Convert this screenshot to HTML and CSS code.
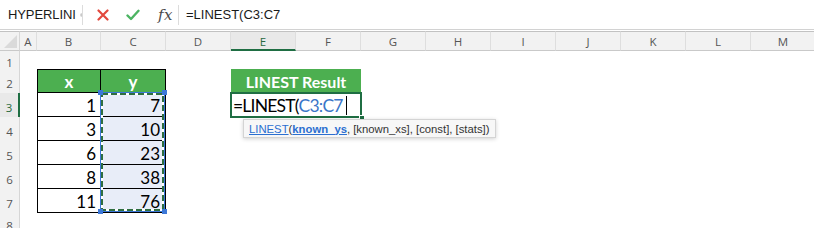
FILE: index.html
```html
<!DOCTYPE html>
<html>
<head>
<meta charset="utf-8">
<link rel="stylesheet" href="styles.css">
</head>
<body>
<div class="fbar">
  <div class="namebox">
    <span class="nb-text">HYPERLINI</span>
    <svg class="nb-arrows" width="9" height="16" viewBox="0 0 9 16"><path d="M4.5 1 L8 6 L1 6 Z" fill="#7a7a7a"/><path d="M4.5 15 L8 10 L1 10 Z" fill="#7a7a7a"/></svg>
  </div>
  <div class="sep"></div>
  <div class="icons">
    <svg class="ic" width="12" height="12" viewBox="0 0 12 12"><path d="M1.5 1.5 L10.5 10.5 M10.5 1.5 L1.5 10.5" stroke="#e2483d" stroke-width="2.2" stroke-linecap="round"/></svg>
    <svg class="ic" width="14" height="12" viewBox="0 0 14 12"><path d="M1.5 6.5 L5 10 L12.5 1.8" stroke="#4cb462" stroke-width="2.4" fill="none" stroke-linecap="round" stroke-linejoin="round"/></svg>
    <span class="fx">fx</span>
  </div>
  <div class="sep"></div>
  <div class="ftext">=LINEST(C3:C7</div>
</div>

<div class="sheet">
  <div class="grid">
    <div class="corner"><div class="tri"></div></div>
    <div class="ch">A</div><div class="ch">B</div><div class="ch">C</div><div class="ch">D</div><div class="ch ch-sel">E</div><div class="ch">F</div><div class="ch">G</div><div class="ch">H</div><div class="ch">I</div><div class="ch">J</div><div class="ch">K</div><div class="ch">L</div><div class="ch">M</div>

    <div class="rh">1</div>
    <div class="c"></div><div class="c"></div><div class="c"></div><div class="c"></div><div class="c"></div><div class="c"></div><div class="c"></div><div class="c"></div><div class="c"></div><div class="c"></div><div class="c"></div><div class="c"></div><div class="c"></div>

    <div class="rh">2</div>
    <div class="c"></div><div class="c t-hd t-first t-top">x</div><div class="c t-hd t-top">y</div><div class="c"></div><div class="c res-hd">LINEST Result</div><div class="c"></div><div class="c"></div><div class="c"></div><div class="c"></div><div class="c"></div><div class="c"></div><div class="c"></div>

    <div class="rh rh-sel">3</div>
    <div class="c"></div><div class="c t-num t-first">1</div><div class="c t-num t-sel">7</div><div class="c"></div><div class="c edit"><span>=LINEST(</span><span class="ref">C3:C7</span><span class="caret"></span></div><div class="c"></div><div class="c"></div><div class="c"></div><div class="c"></div><div class="c"></div><div class="c"></div><div class="c"></div>

    <div class="rh">4</div>
    <div class="c"></div><div class="c t-num t-first">3</div><div class="c t-num t-sel">10</div><div class="c"></div><div class="c"></div><div class="c"></div><div class="c"></div><div class="c"></div><div class="c"></div><div class="c"></div><div class="c"></div><div class="c"></div><div class="c"></div>

    <div class="rh">5</div>
    <div class="c"></div><div class="c t-num t-first">6</div><div class="c t-num t-sel">23</div><div class="c"></div><div class="c"></div><div class="c"></div><div class="c"></div><div class="c"></div><div class="c"></div><div class="c"></div><div class="c"></div><div class="c"></div><div class="c"></div>

    <div class="rh">6</div>
    <div class="c"></div><div class="c t-num t-first">8</div><div class="c t-num t-sel">38</div><div class="c"></div><div class="c"></div><div class="c"></div><div class="c"></div><div class="c"></div><div class="c"></div><div class="c"></div><div class="c"></div><div class="c"></div><div class="c"></div>

    <div class="rh">7</div>
    <div class="c"></div><div class="c t-num t-first">11</div><div class="c t-num t-sel">76</div><div class="c"></div><div class="c"></div><div class="c"></div><div class="c"></div><div class="c"></div><div class="c"></div><div class="c"></div><div class="c"></div><div class="c"></div><div class="c"></div>

    <div class="rh">8</div>
  </div>

  <svg class="marquee" width="69" height="124" viewBox="0 0 69 124">
    <rect x="2.5" y="2.5" width="64" height="119" fill="none" stroke="#3c78d8" stroke-width="1"/>
    <rect x="4" y="4" width="61" height="116" fill="none" stroke="#ffffff" stroke-width="2"/>
    <rect x="4" y="4" width="61" height="116" fill="none" stroke="#2f6e40" stroke-width="2" stroke-dasharray="6 3"/>
    <rect x="0" y="0" width="5" height="5" fill="#3c78d8"/>
    <rect x="64" y="0" width="5" height="5" fill="#3c78d8"/>
    <rect x="0" y="119" width="5" height="5" fill="#3c78d8"/>
    <rect x="64" y="119" width="5" height="5" fill="#3c78d8"/>
  </svg>

  <div class="fill-handle"></div>

  <div class="tip"><span class="lnk">LINEST</span>(<span class="lnk b">known_ys</span>, [known_xs], [const], [stats])</div>
</div>
</body>
</html>
```

FILE: styles.css
```css
html, body {
  margin: 0;
  padding: 0;
  background: #ffffff;
  width: 814px;
  height: 228px;
  overflow: hidden;
}

.fbar {
  height: 29px;
  display: flex;
  align-items: center;
  border-bottom: 1px solid #d2d2d2;
  margin-bottom: 1px;
  font-family: "Liberation Sans", Arial, sans-serif;
  font-size: 13px;
  color: #1a1a1a;
  background: #fff;
}

.namebox {
  width: 82px;
  height: 100%;
  display: flex;
  align-items: center;
  padding-left: 8px;
  box-sizing: border-box;
}

.nb-text {
  letter-spacing: -0.1px;
}

.nb-arrows {
  margin-left: 4px;
}

.sep {
  width: 1px;
  height: 20px;
  background: #dcdcdc;
}

.icons {
  width: 95px;
  display: flex;
  align-items: center;
  padding-left: 14px;
  box-sizing: border-box;
}

.ic {
  margin-right: 17px;
}

.icons .ic:nth-child(2) {
  margin-right: 18px;
}

.fx {
  font-family: "DejaVu Serif", "Liberation Serif", serif;
  font-style: italic;
  font-size: 15px;
  color: #4a4a4a;
  letter-spacing: 0.5px;
}

.ftext {
  padding-left: 7px;
  font-size: 13px;
}

.sheet {
  position: relative;
}

.grid {
  display: grid;
  grid-template-columns: 20px 17px 64px repeat(11, 65px);
  grid-template-rows: 20px 18px 24px 24px 24px 24px 24px 24px 20px;
  font-family: Lato, "Liberation Sans", sans-serif;
}

.corner {
  background: #f2f2f2;
  border-top: 1px solid #c2c2c2;
  border-bottom: 1px solid #c9c9c9;
  border-right: 1px solid #d6d6d6;
  box-sizing: border-box;
  position: relative;
}

.tri {
  position: absolute;
  right: 2px;
  bottom: 2px;
  width: 0;
  height: 0;
  border-left: 13px solid transparent;
  border-bottom: 13px solid #dadada;
}

.ch {
  background: #f2f2f2;
  border-top: 1px solid #c2c2c2;
  border-bottom: 1px solid #c9c9c9;
  border-right: 1px solid #dedede;
  box-sizing: border-box;
  display: flex;
  align-items: center;
  justify-content: center;
  font-family: "Open Sans", "Liberation Sans", sans-serif;
  font-size: 11.5px;
  color: #555;
  padding-top: 1px;
}

.ch-sel {
  color: #2a6a40;
  border-bottom: 2px solid #1f6e43;
  background: #e9e9e9;
  padding-top: 2px;
}

.rh {
  background: #f2f2f2;
  border-right: 1px solid #d6d6d6;
  box-sizing: border-box;
  display: flex;
  align-items: center;
  justify-content: center;
  font-family: "Open Sans", "Liberation Sans", sans-serif;
  font-size: 11.5px;
  color: #555;
  padding-top: 4px;
}

.rh-sel {
  color: #2a6a40;
  border-right: 2px solid #1f6e43;
  background: #e9e9e9;
}

.c {
  box-sizing: border-box;
  background: #fff;
}

.t-hd {
  background: #4caf50;
  color: #fff;
  font-weight: 700;
  font-size: 17px;
  display: flex;
  align-items: center;
  justify-content: center;
  border-right: 1px solid #000;
  border-bottom: 1px solid #000;
  padding-top: 1px;
}

.t-first {
  border-left: 1px solid #000;
}

.t-top {
  border-top: 1px solid #000;
}

.t-num {
  font-size: 17px;
  color: #000;
  display: flex;
  align-items: center;
  justify-content: flex-end;
  padding-right: 4px;
  padding-top: 2px;
  border-right: 1px solid #000;
  border-bottom: 1px solid #000;
}

.t-sel {
  background: #e8edf8;
  padding-right: 5px;
}

.res-hd {
  grid-column: span 2;
  background: #4caf50;
  color: #fff;
  font-weight: 700;
  font-size: 16px;
  display: flex;
  align-items: center;
  justify-content: center;
  padding-top: 1px;
}

.edit {
  grid-column: span 2;
  box-shadow: 0 0 0 1px #1f6e43, inset 0 0 0 1px #1f6e43;
  display: flex;
  align-items: center;
  padding-left: 2px;
  padding-top: 1px;
  font-size: 17.5px;
  letter-spacing: -0.8px;
  color: #000;
  position: relative;
  z-index: 1;
}

.ref {
  color: #3b76c8;
}

.caret {
  width: 1px;
  height: 19px;
  background: #000;
  margin-left: 3px;
}

.marquee {
  position: absolute;
  left: 98px;
  top: 59px;
  overflow: visible;
}

.fill-handle {
  position: absolute;
  left: 359px;
  top: 84px;
  width: 4px;
  height: 4px;
  background: #1f6e43;
  border: 1px solid #fff;
  z-index: 2;
}

.tip {
  position: absolute;
  left: 243px;
  top: 88px;
  height: 19px;
  padding: 0 6px 0 5px;
  display: flex;
  align-items: center;
  background: #f7f7f7;
  border: 1px solid #d4d4d4;
  box-shadow: 0 1px 4px rgba(0, 0, 0, 0.18);
  font-family: "Liberation Sans", Arial, sans-serif;
  font-size: 11.3px;
  color: #333;
  box-sizing: border-box;
  white-space: nowrap;
  z-index: 3;
}

.lnk {
  color: #2b6fd0;
  text-decoration: underline;
}

.lnk.b {
  font-weight: 700;
}
```
